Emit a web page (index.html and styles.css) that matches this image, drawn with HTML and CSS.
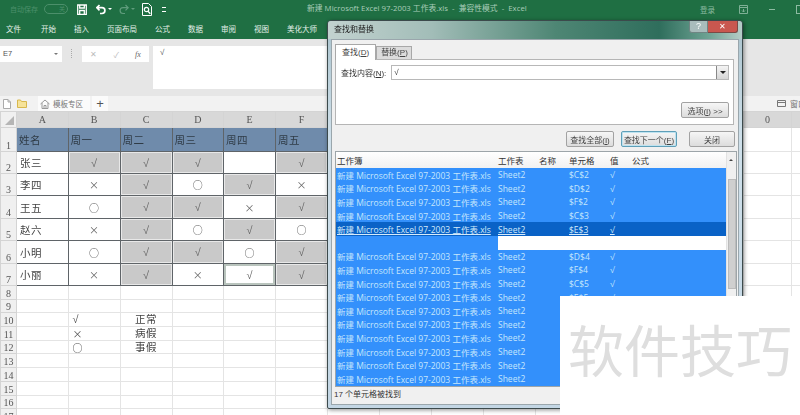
FILE: index.html
```html
<!DOCTYPE html>
<html lang="en">
<head>
    <meta charset="UTF-8">
    <title>查找和替换</title>
    <link rel="stylesheet" href="styles.css">
</head>
<body>
    <div class="topbar">
        <div class="title-row">
            <span class="autosave">自动保存</span>
            <span class="toggle">关</span>
            <svg class="qa qa-save" width="10" height="11" viewBox="0 0 10 11"><path d="M.7 1h8.600v9.300H.7zM2.700 1v3h4.600V1M2.700 10.300V6.500h4.600v3.800" fill="none" stroke="#fff" stroke-width="1.300"/></svg>
            <svg class="qa" width="10" height="11" viewBox="0 0 10 11"><path d="M3.500 1L.8 3.700l2.700 2.700M1.200 3.700h4.800a2.800 2.800 0 0 1 0 5.800H4" fill="none" stroke="#fff" stroke-width="1.700"/></svg>
            <span class="qa-caret"></span>
            <svg class="qa" width="10" height="11" viewBox="0 0 10 11"><path d="M6.500 1l2.700 2.700-2.700 2.700M8.800 3.700H4a2.800 2.800 0 0 0 0 5.800h2" fill="none" stroke="#5f9c7c" stroke-width="1.200"/></svg>
            <span class="qa-caret qa-caret-dim"></span>
            <svg class="qa" width="10" height="13" viewBox="0 0 10 13"><path d="M.5.500h6l3 3v9H.5z" fill="none" stroke="#fff"/><circle cx="4.500" cy="6.500" r="2.200" fill="none" stroke="#fff" stroke-width="1.200"/><path d="M6 8.300l2.300 2.500" stroke="#fff" stroke-width="1.300"/></svg>
            <span class="qa-more"></span>
            <span class="doc-title">新建 Microsoft Excel 97-2003 工作表.xls&nbsp; -&nbsp; 兼容性模式&nbsp; -&nbsp; Excel</span>
            <span class="login">登录</span>
            <svg class="win" width="9" height="9" viewBox="0 0 9 9"><path d="M.5.500h8v8h-8zM.5 2.500h8M4.500 4v3M3 5.500l1.500 1.500L6 5.500" fill="none" stroke="#7fb096"/></svg>
            <span class="win-min"></span>
            <span class="win-max"></span>
        </div>
        <div class="menu-row">
            <span>文件</span>
            <span>开始</span>
            <span>插入</span>
            <span>页面布局</span>
            <span>公式</span>
            <span>数据</span>
            <span>审阅</span>
            <span>视图</span>
            <span>美化大师</span>
        </div>
    </div>

    <div class="formula-bar">
        <div class="name-box">E7<span class="name-caret"></span></div>
        <span class="formula-grip"></span>
        <div class="formula-btns">
            <span>✕</span>
            <span>✓</span>
            <span class="fx">fx</span>
        </div>
        <div class="formula-input">√</div>
    </div>

    <div class="sheet-tabs">
        <svg class="tab-icon" width="8" height="10" viewBox="0 0 8 10"><path d="M.5.500h4.500l2.500 2.500v6.500h-7zM5 .5V3h2.500" fill="#fff" stroke="#aaa"/></svg>
        <svg class="tab-icon" width="10" height="9" viewBox="0 0 10 9"><path d="M.5 1h3l1 1.500h5v6h-9z" fill="#f6e39a" stroke="#d8b84e"/></svg>
        <div class="tab-name">
            <svg width="10" height="10" viewBox="0 0 10 10"><path d="M.5 5L5 1l4.500 4M2 4v5.500h6V4M4 9.500V6.500h2v3" fill="none" stroke="#999"/></svg>
            模板专区
        </div>
        <div class="tab-add">+</div>
        <div class="tab-right">
            <svg width="9" height="7" viewBox="0 0 9 7"><path d="M.5.500h8v6h-8zM.5 2.500h8" fill="none" stroke="#777"/></svg>
            窗口
        </div>
    </div>

    <table class="sheet">
        <colgroup>
            <col class="c-head"><col class="c-a"><col class="c-w"><col class="c-w"><col class="c-a"><col class="c-w"><col class="c-w"><col class="c-w"><col class="c-w"><col class="c-w"><col class="c-w"><col class="c-w"><col class="c-w"><col class="c-w"><col class="c-w"><col class="c-last"><col class="c-tail">
        </colgroup>
        <tr class="h-head">
            <th class="corner"><span class="corner-tri"></span></th><th>A</th><th>B</th><th>C</th><th>D</th><th>E</th><th>F</th><th></th><th></th><th></th><th></th><th></th><th></th><th></th><th></th><th>0</th><th></th>
        </tr>
        <tr class="h-1 data"><th>1</th><td class="hd">姓名</td><td class="hd">周一</td><td class="hd">周二</td><td class="hd">周三</td><td class="hd">周四</td><td class="hd">周五</td><td class="plain" colspan="8"></td><td class="plain"></td><td class="plain"></td></tr>
        <tr class="h-2 data"><th>2</th><td class="nm">张三</td><td class="ok">√</td><td class="ok">√</td><td class="ok">√</td><td></td><td class="ok">√</td><td class="plain" colspan="8"></td><td class="plain"></td><td class="plain"></td></tr>
        <tr class="h-2 data"><th>3</th><td class="nm">李四</td><td class="m">×</td><td class="ok">√</td><td class="m">○</td><td class="ok">√</td><td class="m">×</td><td class="plain" colspan="8"></td><td class="plain"></td><td class="plain"></td></tr>
        <tr class="h-3 data"><th>4</th><td class="nm">王五</td><td class="m">○</td><td class="ok">√</td><td class="ok">√</td><td class="m">×</td><td class="ok">√</td><td class="plain" colspan="8"></td><td class="plain"></td><td class="plain"></td></tr>
        <tr class="h-2 data"><th>5</th><td class="nm">赵六</td><td class="m">×</td><td class="ok">√</td><td class="m">○</td><td class="ok">√</td><td class="m">○</td><td class="plain" colspan="8"></td><td class="plain"></td><td class="plain"></td></tr>
        <tr class="h-3 data"><th>6</th><td class="nm">小明</td><td class="m">○</td><td class="ok">√</td><td class="ok">√</td><td class="m">○</td><td class="ok">√</td><td class="plain" colspan="8"></td><td class="plain"></td><td class="plain"></td></tr>
        <tr class="h-2 data"><th>7</th><td class="nm">小丽</td><td class="m">×</td><td class="ok">√</td><td class="m">×</td><td class="active">√</td><td class="ok">√</td><td class="plain" colspan="8"></td><td class="plain"></td><td class="plain"></td></tr>
        <tr class="h-s"><th>8</th><td></td><td></td><td></td><td></td><td></td><td></td><td colspan="8"></td><td></td><td></td></tr>
        <tr class="h-s"><th>9</th><td></td><td></td><td></td><td></td><td></td><td></td><td colspan="8"></td><td></td><td></td></tr>
        <tr class="h-s"><th>10</th><td></td><td class="lg">√</td><td class="cn">正常</td><td></td><td></td><td></td><td colspan="8"></td><td></td><td></td></tr>
        <tr class="h-s"><th>11</th><td></td><td class="lg m">×</td><td class="cn">病假</td><td></td><td></td><td></td><td colspan="8"></td><td></td><td></td></tr>
        <tr class="h-s"><th>12</th><td></td><td class="lg m">○</td><td class="cn">事假</td><td></td><td></td><td></td><td colspan="8"></td><td></td><td></td></tr>
        <tr class="h-s"><th>13</th><td></td><td></td><td></td><td></td><td></td><td></td><td colspan="8"></td><td></td><td></td></tr>
        <tr class="h-s"><th>14</th><td></td><td></td><td></td><td></td><td></td><td></td><td colspan="8"></td><td></td><td></td></tr>
        <tr class="h-s"><th>15</th><td></td><td></td><td></td><td></td><td></td><td></td><td colspan="8"></td><td></td><td></td></tr>
        <tr class="h-s"><th>16</th><td></td><td></td><td></td><td></td><td></td><td></td><td colspan="8"></td><td></td><td></td></tr>
        <tr class="h-s"><th>17</th><td></td><td></td><td></td><td></td><td></td><td></td><td></td><td></td><td></td><td></td><td></td><td></td><td></td><td></td><td></td><td></td></tr>
    </table>

    <!-- find and replace window, floats over the sheet -->
    <div class="dialog">
        <div class="dlg-title">
            <span>查找和替换</span>
            <div class="dlg-help">?</div>
            <div class="dlg-close">✕</div>
        </div>
        <div class="dlg-body">
            <div class="dlg-tabs">
                <div class="dlg-tab on">查找(<u>D</u>)</div>
                <div class="dlg-tab">替换(<u>P</u>)</div>
            </div>
            <div class="dlg-panel">
                <div class="find-row">
                    <label>查找内容(<u>N</u>):</label>
                    <div class="find-input">√<span class="find-drop"></span></div>
                </div>
                <div class="opt-row"><button class="btn">选项(<u>I</u>) &gt;&gt;</button></div>
            </div>
            <div class="btn-row">
                <button class="btn b-all">查找全部(<u>I</u>)</button>
                <button class="btn b-next">查找下一个(<u>F</u>)</button>
                <button class="btn b-close">关闭</button>
            </div>
            <div class="results">
                <div class="res-list">
                    <div class="res-row res-head"><span class="w1">工作簿</span><span class="w2">工作表</span><span class="w3">名称</span><span class="w4">单元格</span><span class="w5">值</span><span class="w6">公式</span></div>
                    <div class="res-row"><span class="w1">新建 Microsoft Excel 97-2003 工作表.xls</span><span class="w2">Sheet2</span><span class="w3"></span><span class="w4">$C$2</span><span class="w5">√</span></div>
                    <div class="res-row"><span class="w1">新建 Microsoft Excel 97-2003 工作表.xls</span><span class="w2">Sheet2</span><span class="w3"></span><span class="w4">$D$2</span><span class="w5">√</span></div>
                    <div class="res-row"><span class="w1">新建 Microsoft Excel 97-2003 工作表.xls</span><span class="w2">Sheet2</span><span class="w3"></span><span class="w4">$F$2</span><span class="w5">√</span></div>
                    <div class="res-row"><span class="w1">新建 Microsoft Excel 97-2003 工作表.xls</span><span class="w2">Sheet2</span><span class="w3"></span><span class="w4">$C$3</span><span class="w5">√</span></div>
                    <div class="res-row cur"><span class="w1"><u>新建 Microsoft Excel 97-2003 工作表.xls</u></span><span class="w2"><u>Sheet2</u></span><span class="w3"></span><span class="w4"><u>$E$3</u></span><span class="w5"><u>√</u></span></div>
                    <div class="res-row gap"><span class="w1"></span><span class="gap-fill"></span></div>
                    <div class="res-row"><span class="w1">新建 Microsoft Excel 97-2003 工作表.xls</span><span class="w2">Sheet2</span><span class="w3"></span><span class="w4">$D$4</span><span class="w5">√</span></div>
                    <div class="res-row"><span class="w1">新建 Microsoft Excel 97-2003 工作表.xls</span><span class="w2">Sheet2</span><span class="w3"></span><span class="w4">$F$4</span><span class="w5">√</span></div>
                    <div class="res-row"><span class="w1">新建 Microsoft Excel 97-2003 工作表.xls</span><span class="w2">Sheet2</span><span class="w3"></span><span class="w4">$C$5</span><span class="w5">√</span></div>
                    <div class="res-row"><span class="w1">新建 Microsoft Excel 97-2003 工作表.xls</span><span class="w2">Sheet2</span><span class="w3"></span><span class="w4">$E$5</span><span class="w5">√</span></div>
                    <div class="res-row"><span class="w1">新建 Microsoft Excel 97-2003 工作表.xls</span><span class="w2">Sheet2</span></div>
                    <div class="res-row"><span class="w1">新建 Microsoft Excel 97-2003 工作表.xls</span><span class="w2">Sheet2</span></div>
                    <div class="res-row"><span class="w1">新建 Microsoft Excel 97-2003 工作表.xls</span><span class="w2">Sheet2</span></div>
                    <div class="res-row"><span class="w1">新建 Microsoft Excel 97-2003 工作表.xls</span><span class="w2">Sheet2</span></div>
                    <div class="res-row"><span class="w1">新建 Microsoft Excel 97-2003 工作表.xls</span><span class="w2">Sheet2</span></div>
                    <div class="res-row"><span class="w1">新建 Microsoft Excel 97-2003 工作表.xls</span><span class="w2">Sheet2</span></div>
                </div>
                <div class="scrollbar">
                    <span class="arrow"></span>
                    <span class="thumb"></span>
                </div>
            </div>
            <div class="status">17 个单元格被找到</div>
        </div>
    </div>

    <div class="watermark">软件技巧</div>
</body>
</html>
```

FILE: styles.css
```css
html, body {
    margin: 0;
    width: 800px;
    height: 415px;
    overflow: hidden;
}
body {
    position: relative;
    font-family: "Liberation Sans", "Noto Sans CJK SC", sans-serif;
    background: #fff;
    color: #333;
    filter: blur(0.4px);
}
u {
    text-decoration: underline;
}

/* green title and menu bars */
.topbar {
    height: 40px;
    background: #1f6f43;
    color: #e4efe9;
    border-bottom: 1px solid #e3e3e3;
    box-sizing: border-box;
}
.title-row {
    height: 18px;
    display: flex;
    align-items: center;
    font-size: 8px;
}
.autosave {
    margin-left: 10px;
    color: #4c8f6b;
    font-size: 7px;
}
.toggle {
    margin-left: 6px;
    width: 20px;
    height: 8px;
    border: 1px solid #4c8f6b;
    border-radius: 5px;
    color: #4c8f6b;
    font-size: 6px;
    line-height: 8px;
    text-align: right;
    padding-right: 2px;
}
.qa {
    flex: none;
}
.qa-save {
    margin-left: 9px;
    margin-right: 9px;
}
.qa-caret {
    width: 0;
    height: 0;
    margin: 2px 7px 0 2px;
    border: 2px solid transparent;
    border-top: 2px solid #fff;
}
.qa-caret-dim {
    border-top-color: #5f9c7c;
}
.qa-more {
    width: 4px;
    height: 3px;
    margin-left: 10px;
    border-top: 1px solid #fff;
    border-bottom: 1px solid #fff;
}
.doc-title {
    position: absolute;
    left: 307px;
    top: 3px;
    font-family: "Open Sans", "Noto Sans CJK SC", sans-serif;
    font-size: 7.8px;
    line-height: 10px;
    color: #a9cdb9;
    white-space: nowrap;
}
.login {
    margin-left: auto;
    color: #8dbba2;
    font-size: 7.5px;
}
.win {
    margin-left: 24px;
}
.win-min {
    width: 6px;
    height: 1px;
    margin-left: 21px;
    background: #8dbba2;
}
.win-max {
    width: 7px;
    height: 7px;
    margin-left: 21px;
    margin-right: -5px;
    border: 1px solid #8dbba2;
}
.menu-row {
    height: 21px;
    display: flex;
    align-items: center;
    gap: 18px;
    padding-left: 6px;
    font-size: 7.5px;
}
.menu-row span:first-child {
    margin-right: 2px;
}

/* formula bar */
.formula-bar {
    height: 56px;
    box-sizing: border-box;
    padding-top: 6px;
    background: #e6e6e6;
    display: flex;
    align-items: flex-start;
}
.name-box {
    width: 62px;
    height: 16px;
    background: #fff;
    font-size: 7.5px;
    line-height: 16px;
    padding-left: 3px;
    box-sizing: border-box;
    color: #555;
    display: flex;
    justify-content: space-between;
    align-items: center;
}
.name-caret {
    margin: 2px 4px 0 0;
    border: 2px solid transparent;
    border-top: 2px solid #777;
}
.formula-grip {
    width: 1px;
    height: 9px;
    margin: 3px 9px 0;
    border-left: 1px dotted #aaa;
}
.formula-btns {
    width: 67px;
    height: 16px;
    background: #fff;
    display: flex;
    align-items: center;
    justify-content: space-around;
    font-size: 8px;
    color: #bbb;
}
.formula-btns .fx {
    font-family: "Liberation Serif", serif;
    font-style: italic;
    color: #666;
}
.formula-input {
    margin-left: 4px;
    width: 400px;
    height: 43px;
    background: #fff;
    font-size: 8px;
    padding: 2px 0 0 7px;
    box-sizing: border-box;
    color: #555;
}

/* sheet tabs strip */
.sheet-tabs {
    height: 15px;
    background: #f2f2f2;
    display: flex;
    align-items: center;
    font-size: 7.5px;
    color: #777;
}
.tab-icon {
    margin-left: 3px;
    margin-right: 3px;
}
.tab-name {
    margin-left: 8px;
    height: 15px;
    width: 52px;
    box-sizing: border-box;
    padding-left: 2px;
    background: #fbfbfb;
    display: flex;
    align-items: center;
    gap: 3px;
}
.tab-add {
    margin-left: 2px;
    width: 16px;
    height: 15px;
    background: #fbfbfb;
    font-size: 13px;
    line-height: 15px;
    text-align: center;
    color: #555;
}
.tab-right {
    position: absolute;
    left: 777px;
    top: 98px;
    display: flex;
    align-items: center;
    gap: 4px;
    white-space: nowrap;
    font-size: 8px;
}

/* the worksheet */
.sheet {
    border-collapse: collapse;
    table-layout: fixed;
    width: 801px;
    font-size: 11px;
    color: #555;
}
.c-head { width: 16px; }
.c-a { width: 51.5px; }
.c-w { width: 52px; }
.c-last { width: 48px; }
.c-tail { width: 10px; }
.sheet th {
    background: #e6e6e6;
    font-family: "Liberation Serif", serif;
    font-weight: normal;
    font-size: 10px;
    color: #555;
    border: 1px solid #d4d4d4;
    padding: 0;
    overflow: hidden;
}
.sheet tr > th:first-child {
    background: #f0f0f0;
    vertical-align: bottom;
    line-height: 11px;
}
.h-head th {
    background: #d8d8d8;
}
.sheet .corner {
    background: #dcdcdc;
    position: relative;
}
.corner-tri {
    position: absolute;
    right: 2px;
    bottom: 2px;
    border-left: 9px solid transparent;
    border-bottom: 9px solid #b5b5b5;
}
.sheet td {
    border: 1px solid #e4e4e4;
    padding: 0;
    text-align: center;
    white-space: nowrap;
    overflow: hidden;
}
.h-head { height: 16px; }
.h-1 { height: 24px; }
.h-2 { height: 22px; }
.h-3 { height: 23px; }
.h-s { height: 13.7px; }
.h-s td {
    line-height: 11px;
}
.sheet td.m {
    font-family: "Noto Sans CJK SC", sans-serif;
    font-size: 10px;
    line-height: 11px;
}
.sheet td.cn {
    font-size: 10.5px;
    letter-spacing: 0.5px;
    color: #444;
}
.data td {
    border: 1px solid #5f6468;
    color: #666;
}
.data td.plain {
    border: 1px solid #e4e4e4;
    border-left-color: #5f6468;
}
.data td.hd {
    background: #6f8bab;
    text-align: left;
    padding-left: 2px;
    font-size: 10.5px;
    letter-spacing: 0.5px;
    color: #2f3b46;
}
.data td.nm {
    text-align: left;
    padding-left: 3px;
    font-size: 10.5px;
    letter-spacing: 0.5px;
    color: #444;
}
.data td.ok {
    background: #c9c9c9;
    box-shadow: inset 0 0 0 1px #e8e8e8;
}
.data td.active {
    box-shadow: inset 0 0 0 2px #b9c4bd;
}
.sheet td.lg {
    text-align: left;
    padding-left: 4px;
}

/* find and replace dialog */
.dialog {
    position: absolute;
    left: 327px;
    top: 20px;
    width: 416px;
    height: 389px;
    box-sizing: border-box;
    border: 1px solid #3c4a4c;
    border-radius: 4px 4px 2px 2px;
    padding: 0 3px 3px;
    background: linear-gradient(#a9c2cc, #cfe0ea 30%, #c3d6e4);
    box-shadow: 1px 1px 4px rgba(0, 0, 0, 0.45);
    display: flex;
    flex-direction: column;
    font-size: 8px;
    color: #333;
}
.dlg-title {
    height: 18px;
    flex: none;
    margin: 0 -3px;
    padding-left: 6px;
    display: flex;
    align-items: flex-start;
    background: linear-gradient(90deg, #c2d2cf 0, #a2bdb8 25%, #4e8674 55%, #2f6e5c 80%, #6ea394 92%, #b7cdc8 100%);
    border-radius: 3px 3px 0 0;
    line-height: 18px;
    font-size: 8px;
    color: #222;
}
.dlg-title > span {
    flex: 1;
}
.dlg-help {
    width: 17px;
    height: 11px;
    line-height: 11px;
    text-align: center;
    background: #a9bcbc;
    border: 1px solid #6f8583;
    border-top: 0;
    border-radius: 0 0 0 3px;
    color: #fff;
    font-size: 9px;
}
.dlg-close {
    width: 29px;
    height: 11px;
    margin-right: 4px;
    line-height: 11px;
    text-align: center;
    background: #c9574f;
    border: 1px solid #7b4a46;
    border-top: 0;
    border-left: 0;
    border-radius: 0 0 3px 0;
    color: #fff;
    font-size: 8px;
}
.dlg-body {
    flex: 1;
    min-height: 0;
    background: #f0f0f0;
    display: flex;
    flex-direction: column;
    padding: 4px 0 0;
    border: 1px solid #9aa6ac;
}
.dlg-tabs {
    margin-left: 3px;
    display: flex;
    align-items: flex-end;
    height: 15px;
}
.dlg-tab {
    height: 12px;
    padding: 0 3px 0 4px;
    line-height: 12px;
    background: #dcdcdc;
    border: 1px solid #a8a8a8;
    border-bottom: 0;
    color: #444;
}
.dlg-tab.on {
    height: 15px;
    line-height: 15px;
    padding: 0 6px;
    background: #fff;
    position: relative;
    top: 1px;
}
.dlg-panel {
    margin: 0 4px 0 3px;
    height: 66px;
    box-sizing: border-box;
    background: #fff;
    border: 1px solid #b5b5b5;
    padding: 5px 4px 6px 5px;
    display: flex;
    flex-direction: column;
    justify-content: space-between;
}
.find-row {
    display: flex;
    align-items: center;
    gap: 5px;
}
.find-input {
    flex: 1;
    height: 15px;
    box-sizing: border-box;
    border: 1px solid #b8b8b8;
    padding-left: 2px;
    line-height: 13px;
    display: flex;
    justify-content: space-between;
}
.find-drop {
    width: 11px;
    height: 13px;
    background: linear-gradient(#f4f4f4, #d6d6d6);
    border-left: 1px solid #888;
    position: relative;
}
.find-drop::after {
    content: "";
    position: absolute;
    left: 3px;
    top: 5px;
    border: 3px solid transparent;
    border-top: 3px solid #222;
}
.opt-row {
    display: flex;
    justify-content: flex-end;
}
.btn {
    height: 16px;
    padding: 0;
    font: inherit;
    font-family: "Liberation Sans", "Noto Sans CJK SC", sans-serif;
    color: #444;
    background: linear-gradient(#f6f6f6, #dcdcdc);
    border: 1px solid #a2a2a2;
    border-radius: 2px;
    box-sizing: border-box;
}
.opt-row .btn {
    width: 48px;
}
.btn-row {
    display: flex;
    margin: 6px 3px 0 0;
    justify-content: flex-end;
}
.b-all {
    width: 48px;
    margin-right: 7px;
}
.b-next {
    width: 56px;
    margin-right: 12px;
    border-color: #5f9fb8;
    box-shadow: inset 0 0 0 1px #bfe3f0;
}
.b-close {
    width: 46px;
}
.results {
    margin: 4px 1px 0 3px;
    flex: 1;
    min-height: 0;
    display: flex;
    background: #fff;
    border: 1px solid #9da5a9;
    overflow: hidden;
}
.res-list {
    flex: 1;
    min-width: 0;
    overflow: hidden;
    color: #c6e6fc;
}
.res-row {
    height: 13.6px;
    display: flex;
    align-items: center;
    background: #3390fb;
    white-space: nowrap;
    font-family: "Open Sans", "Noto Sans CJK SC", sans-serif;
    font-size: 8.5px;
}
.res-head {
    height: 16px;
    background: linear-gradient(#fff, #f1f1f1);
    color: #333;
}
.res-row.cur {
    background: #0a62c6;
    color: #d5ebfb;
}
.w1 { width: 162px; padding-left: 1px; flex: none; box-sizing: border-box; }
.w2 { width: 41px; flex: none; }
.w3 { width: 30px; flex: none; }
.w4 { width: 41px; flex: none; }
.w5 { width: 22px; flex: none; }
.w6 { flex: none; }
.gap-fill {
    flex: 1;
    height: 100%;
    background: #fff;
}
.scrollbar {
    width: 9px;
    flex: none;
    background: #f0f0f0;
    border-left: 1px solid #e2e2e2;
    position: relative;
}
.arrow {
    position: absolute;
    left: 2px;
    top: 5px;
    border: 2px solid transparent;
    border-bottom: 2px solid #444;
}
.thumb {
    position: absolute;
    left: 1px;
    right: 0;
    top: 27px;
    height: 110px;
    background: #cfcfcf;
    border: 1px solid #bbb;
    box-sizing: border-box;
}
.status {
    flex: none;
    height: 17px;
    padding-left: 2px;
    line-height: 15px;
    font-size: 8px;
    color: #333;
    background: #f0f0f0;
}

/* corner watermark over the screenshot */
.watermark {
    position: absolute;
    left: 560px;
    top: 296px;
    width: 240px;
    height: 119px;
    box-sizing: border-box;
    padding-left: 8px;
    background: #fff;
    font-size: 56px;
    line-height: 113px;
    color: #dedede;
    white-space: nowrap;
}
```
